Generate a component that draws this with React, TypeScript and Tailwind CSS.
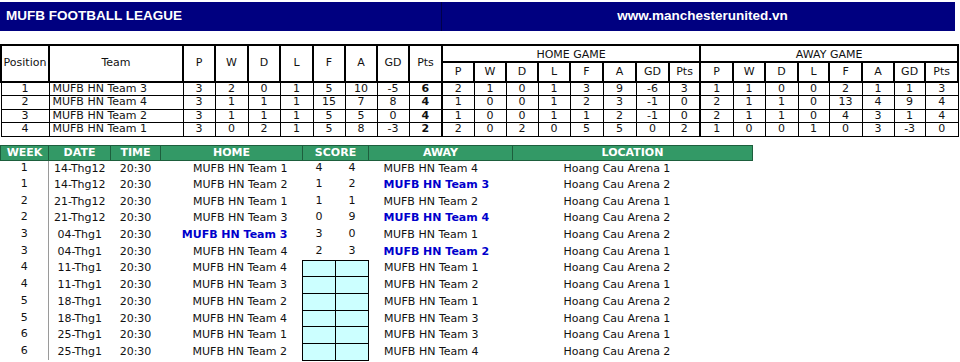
import React from "react";

type SRow = { pos: number; team: string; all: (number)[]; home: number[]; away: number[] };

const standings: SRow[] = [
  { pos: 1, team: "MUFB HN Team 3", all: [3, 2, 0, 1, 5, 10, -5, 6], home: [2, 1, 0, 1, 3, 9, -6, 3], away: [1, 1, 0, 0, 2, 1, 1, 3] },
  { pos: 2, team: "MUFB HN Team 4", all: [3, 1, 1, 1, 15, 7, 8, 4], home: [1, 0, 0, 1, 2, 3, -1, 0], away: [2, 1, 1, 0, 13, 4, 9, 4] },
  { pos: 3, team: "MUFB HN Team 2", all: [3, 1, 1, 1, 5, 5, 0, 4], home: [1, 0, 0, 1, 1, 2, -1, 0], away: [2, 1, 1, 0, 4, 3, 1, 4] },
  { pos: 4, team: "MUFB HN Team 1", all: [3, 0, 2, 1, 5, 8, -3, 2], home: [2, 0, 2, 0, 5, 5, 0, 2], away: [1, 0, 0, 1, 0, 3, -3, 0] },
];

const colW = [32, 33, 32, 33, 32, 32, 32, 33, 32, 32, 32, 32, 33, 33, 33, 31, 33, 32, 33, 31, 33, 32, 31, 33];
const sub = ["P", "W", "D", "L", "F", "A", "GD", "Pts"];

type Game = {
  week: number;
  date: string;
  home: string;
  s1?: number;
  s2?: number;
  away: string;
  loc: string;
  win?: "home" | "away";
};

const games: Game[] = [
  { week: 1, date: "14-Thg12", home: "MUFB HN Team 1", s1: 4, s2: 4, away: "MUFB HN Team 4", loc: "Hoang Cau Arena 1" },
  { week: 1, date: "14-Thg12", home: "MUFB HN Team 2", s1: 1, s2: 2, away: "MUFB HN Team 3", loc: "Hoang Cau Arena 2", win: "away" },
  { week: 2, date: "21-Thg12", home: "MUFB HN Team 1", s1: 1, s2: 1, away: "MUFB HN Team 2", loc: "Hoang Cau Arena 1" },
  { week: 2, date: "21-Thg12", home: "MUFB HN Team 3", s1: 0, s2: 9, away: "MUFB HN Team 4", loc: "Hoang Cau Arena 2", win: "away" },
  { week: 3, date: "04-Thg1", home: "MUFB HN Team 3", s1: 3, s2: 0, away: "MUFB HN Team 1", loc: "Hoang Cau Arena 2", win: "home" },
  { week: 3, date: "04-Thg1", home: "MUFB HN Team 4", s1: 2, s2: 3, away: "MUFB HN Team 2", loc: "Hoang Cau Arena 1", win: "away" },
  { week: 4, date: "11-Thg1", home: "MUFB HN Team 4", away: "MUFB HN Team 1", loc: "Hoang Cau Arena 2" },
  { week: 4, date: "11-Thg1", home: "MUFB HN Team 3", away: "MUFB HN Team 2", loc: "Hoang Cau Arena 1" },
  { week: 5, date: "18-Thg1", home: "MUFB HN Team 2", away: "MUFB HN Team 1", loc: "Hoang Cau Arena 2" },
  { week: 5, date: "18-Thg1", home: "MUFB HN Team 4", away: "MUFB HN Team 3", loc: "Hoang Cau Arena 1" },
  { week: 6, date: "25-Thg1", home: "MUFB HN Team 1", away: "MUFB HN Team 3", loc: "Hoang Cau Arena 1" },
  { week: 6, date: "25-Thg1", home: "MUFB HN Team 2", away: "MUFB HN Team 4", loc: "Hoang Cau Arena 2" },
];

export default function App() {
  return (
    <div className="w-[960px] h-[362px] bg-white overflow-hidden font-['DejaVu_Sans',Verdana,sans-serif] text-[11px] text-[#111]">
      {/* Title bar */}
      <div className="mt-[2px] flex h-[29px] w-[955px] bg-[#000080] font-['Liberation_Sans',Arial,sans-serif] text-[13.5px] font-bold text-white">
        <div className="flex w-[442px] items-center border-r border-[#00004a] pl-[6px]">MUFB FOOTBALL LEAGUE</div>
        <div className="flex flex-1 items-center justify-center pl-[8px]">www.manchesterunited.vn</div>
      </div>

      {/* Standings */}
      <table className="mt-[13px] w-[957px] table-fixed border-collapse">
        <colgroup>
          <col style={{ width: 48 }} />
          <col style={{ width: 134 }} />
          {colW.map((w, i) => (
            <col key={i} style={{ width: w }} />
          ))}
        </colgroup>
        <thead>
          <tr className="h-[15px]">
            <th rowSpan={2} className="border-2 border-black p-0 text-center font-normal">Position</th>
            <th rowSpan={2} className="border-2 border-black p-0 text-center font-normal">Team</th>
            {sub.map((s) => (
              <th key={s} rowSpan={2} className="border-2 border-black p-0 text-center font-normal">
                {s}
              </th>
            ))}
            <th colSpan={8} className="border-2 border-black p-0 pt-[2px] text-center font-normal leading-[13px]">HOME GAME</th>
            <th colSpan={8} className="border-2 border-black p-0 pt-[2px] text-center font-normal leading-[13px]">AWAY GAME</th>
          </tr>
          <tr className="h-[20px]">
            {[...sub, ...sub].map((s, i) => (
              <th key={i} className="border-2 border-black p-0 text-center font-normal">
                {s}
              </th>
            ))}
          </tr>
        </thead>
        <tbody>
          {standings.map((r) => (
            <tr key={r.pos} className="h-[13.5px] leading-[12px]">
              <td className="border border-black p-0 text-center">{r.pos}</td>
              <td className="border border-black p-0 pl-[3px] text-left">{r.team}</td>
              {r.all.map((v, i) => (
                <td key={"a" + i} className={`border border-black p-0 text-center ${i === 7 ? "font-bold" : ""}`}>
                  {v}
                </td>
              ))}
              {r.home.map((v, i) => (
                <td key={"h" + i} className={`border border-black p-0 text-center ${i === 0 ? "border-l-2" : ""}`}>
                  {v}
                </td>
              ))}
              {r.away.map((v, i) => (
                <td key={"w" + i} className={`border border-black p-0 text-center ${i === 0 ? "border-l-2" : ""}`}>
                  {v}
                </td>
              ))}
            </tr>
          ))}
        </tbody>
      </table>

      {/* Schedule */}
      <table className="mt-[8px] w-[752px] table-fixed border-collapse">
        <colgroup>
          <col style={{ width: 48 }} />
          <col style={{ width: 62 }} />
          <col style={{ width: 50 }} />
          <col style={{ width: 142 }} />
          <col style={{ width: 33 }} />
          <col style={{ width: 33 }} />
          <col style={{ width: 144 }} />
          <col style={{ width: 240 }} />
        </colgroup>
        <thead>
          <tr className="h-[15px] bg-[#339966] text-[11px] font-bold text-white">
            <th className="border border-[#1d5e3d] p-0 text-center leading-[13px]">WEEK</th>
            <th className="border border-[#1d5e3d] p-0 text-center leading-[13px]">DATE</th>
            <th className="border border-[#1d5e3d] p-0 text-center leading-[13px]">TIME</th>
            <th className="border border-[#1d5e3d] p-0 text-center leading-[13px]">HOME</th>
            <th colSpan={2} className="border border-[#1d5e3d] p-0 text-center leading-[13px]">SCORE</th>
            <th className="border border-[#1d5e3d] p-0 text-center leading-[13px]">AWAY</th>
            <th className="border border-[#1d5e3d] p-0 text-center leading-[13px]">LOCATION</th>
          </tr>
        </thead>
        <tbody>
          {games.map((g, i) => {
            const empty = g.s1 === undefined;
            const homeWin = g.win === "home";
            const awayWin = g.win === "away";
            return (
              <tr key={i} className="h-[16.7px] leading-[14px]">
                <td className="border-r border-[#9a9a9a] p-0 pb-[2px] text-center">{g.week}</td>
                <td className="p-0 text-center">{g.date}</td>
                <td className="p-0 text-center">20:30</td>
                <td className={`p-0 pr-[15px] text-right ${homeWin ? "font-bold text-[#0000cc]" : ""}`}>{g.home}</td>
                <td className={`p-0 text-center ${empty ? "border border-black bg-[#ccffff]" : "pb-[2px]"}`}>{g.s1}</td>
                <td className={`p-0 text-center ${empty ? "border border-black bg-[#ccffff]" : "pb-[2px]"}`}>{g.s2}</td>
                <td className={`p-0 pl-[15px] text-left ${awayWin ? "font-bold text-[#0000cc]" : ""}`}>{g.away}</td>
                <td className="p-0 pl-[51px] text-left">{g.loc}</td>
              </tr>
            );
          })}
        </tbody>
      </table>
    </div>
  );
}
